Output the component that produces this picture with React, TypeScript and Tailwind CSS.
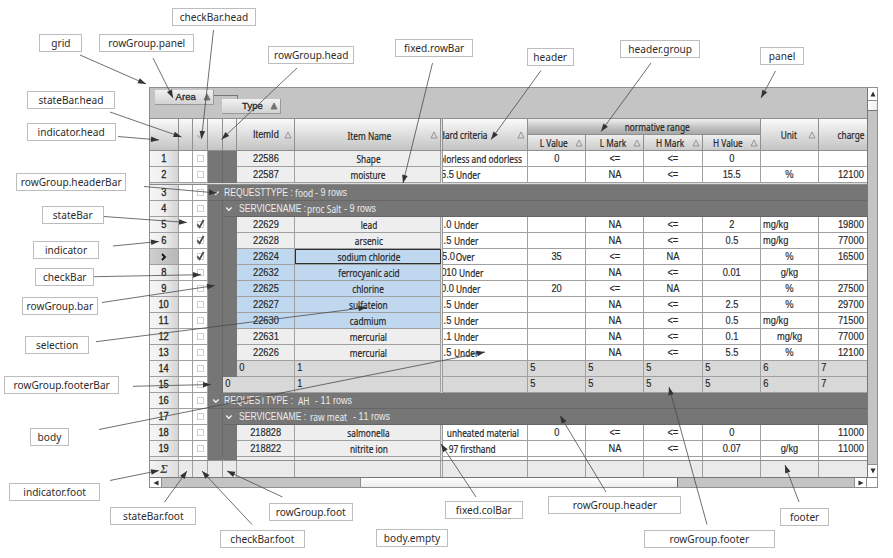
import type { ReactNode } from "react";

const SANS = "font-['Liberation_Sans',Arial,sans-serif] text-[10px] inline-block scale-x-[0.93] [font-kerning:none] [-webkit-text-stroke:0.15px]";
const HUMAN = "font-['Noto_Sans','Open_Sans',sans-serif] text-[10px] inline-block scale-x-[0.83] [-webkit-text-stroke:0.2px]";

const isNumeric = (s: string) => /^[\d.<=%]+$|^NA$|kg$/.test(s);

function Txt({ children, className = "" }: { children: string; className?: string }) {
  return (
    <span className={`${isNumeric(children) ? SANS : HUMAN} whitespace-pre leading-none ${className}`}>{children}</span>
  );
}

function Cell({ w, bg = "bg-white", className = "justify-center", children }: { w: string; bg?: string; className?: string; children?: ReactNode }) {
  return (
    <div className={`flex h-full shrink-0 items-center overflow-hidden border-r border-[#a0a0a0] ${w} ${bg} ${className}`}>{children}</div>
  );
}

function SortMark({ filled = false }: { filled?: boolean }) {
  return (
    <svg width="8" height="8" viewBox="0 0 8 8" className="shrink-0">
      <path d="M4 1 L7 7 H1 Z" fill={filled ? "#707070" : "none"} stroke={filled ? "#707070" : "#8c8c8c"} strokeWidth="0.9" />
    </svg>
  );
}

function HeadCell({ w, label, sans = false, shift = "", small = false }: { w: string; label?: string; sans?: boolean; shift?: string; small?: boolean }) {
  return (
    <div className={`relative flex h-full shrink-0 items-center justify-center overflow-hidden border-r border-[#8f8f8f] bg-linear-to-b ${small ? "from-[#eeeeee] to-[#cbcbcb]" : "from-[#fafafa] via-[#dedede] to-[#c4c4c4]"} ${w}`}>
      {label && (
        <>
          <span className={`${sans ? SANS : HUMAN} whitespace-nowrap leading-none ${shift}`}>{label}</span>
          <span className="absolute right-[2px]"><SortMark /></span>
        </>
      )}
    </div>
  );
}

function Chevron() {
  return (
    <svg width="8" height="6" viewBox="0 0 8 6" className="shrink-0">
      <path d="M1.2 1.5 L3.8 4.3 L6.6 1.5" fill="none" stroke="#f4f4f4" strokeWidth="1.3" />
    </svg>
  );
}

function CheckBox({ on = false }: { on?: boolean }) {
  return (
    <span className="relative block size-[7px] border border-[#cfcfcf] bg-white">
      {on && (
        <svg width="9" height="10" viewBox="0 0 9 10" className="absolute -top-[3px] -left-[2px]">
          <path d="M1.3 5.4 L3.6 8.2 L7.6 1" fill="none" stroke="#484848" strokeWidth="1.7" />
        </svg>
      )}
    </span>
  );
}

function Row({ n, checked = false, children, last = "border-[#a0a0a0]" }: { n: string; checked?: boolean; children: ReactNode; last?: string }) {
  const current = n === "7";
  return (
    <div className="flex h-4 shrink-0">
      <div className={`flex h-full w-[29px] shrink-0 items-center justify-center border-r border-b border-[#a0a0a0] bg-linear-to-r ${current ? "from-[#cfcfcf] to-[#b8b8b8]" : "from-[#f6f6f6] via-[#eeeeee] to-[#d4d4d4]"}`}>
        {current ? (
          <svg width="6" height="8" viewBox="0 0 6 8"><path d="M1 1 L4 4 L1 7" fill="none" stroke="#111" strokeWidth="1.8" /></svg>
        ) : (
          <span className="inline-block scale-x-[0.93] font-['Liberation_Sans',Arial,sans-serif] text-[10px] leading-none [font-kerning:none] [-webkit-text-stroke:0.3px]">{n}</span>
        )}
      </div>
      <div className="w-[14px] shrink-0 border-r border-b border-[#a0a0a0] bg-white" />
      <div className="flex w-[15px] shrink-0 items-center justify-center border-r border-b border-[#a0a0a0] bg-white">
        <CheckBox on={checked} />
      </div>
      <div className={`flex h-full min-w-0 grow border-b ${last}`}>{children}</div>
    </div>
  );
}

const DARK = "bg-[#767676]";
const Bar1 = () => <div className={`-mb-px w-[15px] shrink-0 border-r border-[#696969] ${DARK}`} />;
const Bar2 = () => <div className={`-mb-px w-[14px] shrink-0 ${DARK}`} />;

type Item = { n: string; id: string; name: string; crit: string; critWord: string; critAt: string; v: string[]; unit: string; unitAt?: string; charge: string; sel?: boolean; on?: boolean };

const fixedItems: Item[] = [
  { n: "1", id: "22586", name: "Shape", crit: "", critWord: "olorless and odorless", critAt: "pr-[5px]", v: ["0", "<=", "<=", "0"], unit: "", charge: "" },
  { n: "2", id: "22587", name: "moisture", crit: "5.5", critWord: "Under", critAt: "pr-[47px]", v: ["", "NA", "<=", "15.5"], unit: "%", charge: "12100" },
];
const LEFT = "justify-start pl-[2px]";
const saltItems: Item[] = [
  { n: "5", id: "22629", name: "lead", crit: ".0", critWord: "Under", critAt: "pr-[49px]", v: ["", "NA", "<=", "2"], unit: "mg/kg", unitAt: LEFT, charge: "19800", on: true },
  { n: "6", id: "22628", name: "arsenic", crit: ".5", critWord: "Under", critAt: "pr-[49px]", v: ["", "NA", "<=", "0.5"], unit: "mg/kg", unitAt: LEFT, charge: "77000", on: true },
  { n: "7", id: "22624", name: "sodium chloride", crit: "5.0", critWord: "Over", critAt: "pr-[52px]", v: ["35", "<=", "NA", ""], unit: "%", charge: "16500", on: true, sel: true },
  { n: "8", id: "22632", name: "ferrocyanic acid", crit: "010", critWord: "Under", critAt: "pr-[44px]", v: ["", "NA", "<=", "0.01"], unit: "g/kg", charge: "", sel: true },
  { n: "9", id: "22625", name: "chlorine", crit: "0.0", critWord: "Under", critAt: "pr-[47px]", v: ["20", "<=", "NA", ""], unit: "%", charge: "27500", sel: true },
  { n: "10", id: "22627", name: "sulfateion", crit: ".5", critWord: "Under", critAt: "pr-[49px]", v: ["", "NA", "<=", "2.5"], unit: "%", charge: "29700", sel: true },
  { n: "11", id: "22630", name: "cadmium", crit: ".5", critWord: "Under", critAt: "pr-[49px]", v: ["", "NA", "<=", "0.5"], unit: "mg/kg", unitAt: LEFT, charge: "71500", sel: true },
  { n: "12", id: "22631", name: "mercurial", crit: ".1", critWord: "Under", critAt: "pr-[49px]", v: ["", "NA", "<=", "0.1"], unit: "mg/kg", unitAt: "justify-end pr-[15px]", charge: "77000" },
  { n: "13", id: "22626", name: "mercurial", crit: ".5", critWord: "Under", critAt: "pr-[49px]", v: ["", "NA", "<=", "5.5"], unit: "%", charge: "12100" },
];
const meatItems: Item[] = [
  { n: "18", id: "218828", name: "salmonella", crit: "", critWord: "unheated material", critAt: "pr-[8px]", v: ["0", "<=", "<=", "0"], unit: "", charge: "11000" },
  { n: "19", id: "218822", name: "nitrite ion", crit: "", critWord: "97 firsthand", critAt: "pr-[31px]", v: ["", "NA", "<=", "0.07"], unit: "g/kg", charge: "11000" },
];

const VALUE_W = ["w-[58px]", "w-[58px]", "w-[59px]", "w-[58px]"];

function ColBar() {
  return <div className="-mb-px w-[2px] shrink-0 border-r border-[#999] bg-[#e2e2e2]" />;
}

function ItemRow({ r }: { r: Item }) {
  const bg = r.sel ? "bg-[#bfd8f0]" : "bg-[#eeeeee]";
  return (
    <Row n={r.n} checked={r.on}>
      <Bar1 />
      <Bar2 />
      <Cell w="w-[58px]" bg={bg}><Txt>{r.id}</Txt></Cell>
      <Cell w="w-[146px]" bg={bg} className={r.n === "7" ? "justify-center pl-[2px] outline outline-[#303030] -outline-offset-1" : "justify-center pl-[2px]"}>
        <Txt>{r.name}</Txt>
      </Cell>
      <ColBar />
      <Cell w="w-[85px]" className={`justify-end ${r.critAt}`}>
        <span className="flex shrink-0 items-center whitespace-nowrap">
          {r.crit && <Txt className="-mr-[3px] origin-right">{r.crit}</Txt>}
          <Txt className="origin-right">{r.critWord}</Txt>
        </span>
      </Cell>
      {r.v.map((v, i) => (
        <Cell key={i} w={VALUE_W[i]}>{v && <Txt>{v}</Txt>}</Cell>
      ))}
      <Cell w="w-[58px]" className={r.unitAt ?? "justify-center"}>{r.unit && <Txt className={r.unitAt === LEFT ? "origin-left" : ""}>{r.unit}</Txt>}</Cell>
      <div className="flex w-12 shrink-0 items-center justify-end bg-white pr-[3px]">{r.charge && <Txt className="origin-right">{r.charge}</Txt>}</div>
    </Row>
  );
}

function GroupRow({ n, nested = false, field, fieldW, name, nameW, count }: { n: string; nested?: boolean; field: string; fieldW: string; name: string; nameW: string; count: string }) {
  return (
    <Row n={n} last="border-[#666666]">
      {nested && <Bar1 />}
      <div className={`flex grow items-center text-[#ececec] ${DARK} ${nested ? "pl-[2px]" : "pl-[4px]"}`}>
        <Chevron />
        <span className={`${nested ? "ml-[6px]" : "ml-[4px]"} flex shrink-0 ${fieldW}`}>
          <span className="block origin-left scale-x-[0.86] whitespace-nowrap font-['Liberation_Sans',Arial,sans-serif] text-[10px] leading-none">{field}</span>
        </span>
        <span className={`flex shrink-0 items-center ${nameW}`}>
          <span className="block origin-left scale-x-[0.84] whitespace-nowrap font-['Noto_Sans',sans-serif] text-[10px] leading-none">{name}</span>
        </span>
        <span className="block origin-left scale-x-[0.9] whitespace-nowrap font-['Liberation_Sans',Arial,sans-serif] text-[10px] leading-none [font-kerning:none]">{count}</span>
      </div>
    </Row>
  );
}

function FootRow({ n, outer = false }: { n: string; outer?: boolean }) {
  const c = "justify-start items-start pt-px pl-[2px]";
  const g = "bg-[#d8d8d8]";
  return (
    <Row n={n}>
      <Bar1 />
      {!outer && <Bar2 />}
      <Cell w={outer ? "w-[72px]" : "w-[58px]"} bg={g} className={c}><Txt className="pt-px">0</Txt></Cell>
      <Cell w="w-[146px]" bg={g} className={c}><Txt className="pt-px">1</Txt></Cell>
      <ColBar />
      <Cell w="w-[85px]" bg={g} />
      {VALUE_W.map((w, i) => (
        <Cell key={i} w={w} bg={g} className={c}><Txt className="pt-px">5</Txt></Cell>
      ))}
      <Cell w="w-[58px]" bg={g} className={c}><Txt className="pt-px">6</Txt></Cell>
      <div className={`flex w-12 items-start pt-px pl-[2px] ${g}`}><Txt className="pt-px">7</Txt></div>
    </Row>
  );
}

function GroupPanel() {
  const chip = "absolute flex h-[15px] w-[59px] items-center justify-end gap-[7px] border-r border-b border-[#999] bg-linear-to-b from-[#f2f2f2] to-[#d2d2d2] pr-[2px]";
  const t = "font-['Liberation_Sans',Arial,sans-serif] text-[9.5px] leading-none tracking-[0.1px] [-webkit-text-stroke:0.3px]";
  return (
    <div className="relative h-[30px] shrink-0 bg-[#c4c4c4]">
      <div className="absolute top-[7px] left-[63px] h-[5px] w-[25px] border-t border-r border-[#777]" />
      <div className={`${chip} top-[2px] left-[5px]`}><span className={t}>Area</span><SortMark filled /></div>
      <div className={`${chip} top-[11px] left-[72px]`}><span className={t}>Type</span><SortMark filled /></div>
    </div>
  );
}

function Header() {
  return (
    <div className="flex h-[33px] shrink-0 border-y border-[#8f8f8f]">
      <HeadCell w="w-[29px]" />
      <HeadCell w="w-[14px]" />
      <div className="flex w-[15px] shrink-0 items-center justify-center border-r border-[#8f8f8f] bg-linear-to-b from-[#fafafa] via-[#dedede] to-[#c4c4c4]">
        <svg width="8" height="8" viewBox="0 0 8 8"><path d="M1 4 L3.5 6.5 L7 1" fill="none" stroke="#b5b5b5" strokeWidth="1.2" /></svg>
      </div>
      <HeadCell w="w-[15px]" />
      <HeadCell w="w-[14px]" />
      <HeadCell w="w-[58px]" label="ItemId" sans />
      <HeadCell w="w-[146px]" label="Item Name" shift="ml-[3px] mt-[2px]" />
      <div className="w-[2px] shrink-0 border-r border-[#8f8f8f] bg-[#e2e2e2]" />
      <div className="relative flex w-[85px] shrink-0 items-center justify-end overflow-hidden border-r border-[#8f8f8f] bg-linear-to-b from-[#fafafa] via-[#dedede] to-[#c4c4c4] pr-[39px]">
        <span className={`${HUMAN} origin-right whitespace-nowrap leading-none`}>dard criteria</span>
        <span className="absolute right-[2px]"><SortMark /></span>
      </div>
      <div className="flex w-[233px] shrink-0 flex-col">
        <div className="flex h-4 shrink-0 items-center justify-center border-r border-b border-[#8f8f8f] bg-linear-to-b from-[#f0f0f0] via-[#c6c6c6] to-[#a6a6a6] pl-[26px]">
          <span className={`${HUMAN} leading-none`}>normative range</span>
        </div>
        <div className="flex min-h-0 grow">
          <HeadCell w="w-[58px]" label="L Value" shift="-ml-[6px]" small />
          <HeadCell w="w-[58px]" label="L Mark" shift="-ml-[3px]" small />
          <HeadCell w="w-[59px]" label="H Mark" shift="-ml-[5px]" small />
          <HeadCell w="w-[58px]" label="H Value" shift="-ml-[8px]" small />
        </div>
      </div>
      <HeadCell w="w-[58px]" label="Unit" shift="-ml-[2px]" />
      <div className="flex w-12 shrink-0 items-center justify-end bg-linear-to-b from-[#fafafa] via-[#dedede] to-[#c4c4c4] pr-[3px]">
        <span className={`${HUMAN} origin-right leading-none`}>charge</span>
      </div>
    </div>
  );
}

const FOOT_W = ["w-[14px]", "w-[15px]", "w-[15px]", "w-[14px]", "w-[58px]", "w-[146px]", "w-[2px]", "w-[85px]", "w-[58px]", "w-[58px]", "w-[59px]", "w-[58px]", "w-[58px]"];

function Footer() {
  return (
    <div className="flex h-[17px] shrink-0 border-t border-[#8f8f8f] bg-[#eaeaea]">
      <div className="flex w-[29px] shrink-0 items-center justify-center border-r border-[#a0a0a0] bg-linear-to-r from-[#f4f4f4] to-[#dedede]">
        <span className="font-['Liberation_Serif',serif] text-[12px] font-bold italic leading-none text-[#444]">Σ</span>
      </div>
      {FOOT_W.map((w, i) => (
        <div key={i} className={`shrink-0 border-r border-[#a0a0a0] ${w}`} />
      ))}
    </div>
  );
}

function EmptyStrip() {
  return (
    <div className="flex h-[3px] shrink-0 bg-white">
      <div className="w-[29px] shrink-0 border-r border-[#a0a0a0] bg-[#ececec]" />
      <div className="w-[14px] shrink-0 border-r border-[#a0a0a0]" />
      <div className="w-[15px] shrink-0 border-r border-[#a0a0a0]" />
      <div className={`w-[29px] shrink-0 ${DARK}`} />
      <div className="w-[58px] shrink-0 border-r border-[#a0a0a0] bg-[#eee]" />
      <div className="w-[146px] shrink-0 border-r border-[#a0a0a0] bg-[#eee]" />
      <ColBar />
      {["w-[85px]", ...VALUE_W, "w-[58px]"].map((w, i) => (
        <div key={i} className={`shrink-0 border-r border-[#a0a0a0] ${w}`} />
      ))}
    </div>
  );
}

function Glyph({ d }: { d: string }) {
  return <svg width="8" height="8" viewBox="0 0 8 8"><path d={d} fill="#2e2e2e" /></svg>;
}

function Grid() {
  return (
    <div className="mt-[87px] ml-[149px] flex h-[401px] w-[729px] flex-col border border-[#8f8f8f] text-[#262626]">
      <div className="flex h-[389px] shrink-0">
        <div className="flex w-[717px] shrink-0 flex-col overflow-hidden">
          <GroupPanel />
          <Header />
          {fixedItems.map((r) => <ItemRow key={r.n} r={r} />)}
          <div className="h-[2px] shrink-0 border-b border-[#8a8a8a] bg-[#dcdcdc]" />
          <GroupRow n="3" field="REQUESTTYPE :" fieldW="w-[71px]" name="food" nameW="w-[20px]" count="- 9 rows" />
          <GroupRow n="4" nested field="SERVICENAME :" fieldW="w-[68px]" name="proc Salt" nameW="w-[37px]" count="- 9 rows" />
          {saltItems.map((r) => <ItemRow key={r.n} r={r} />)}
          <FootRow n="14" />
          <FootRow n="15" outer />
          <GroupRow n="16" field="REQUESTTYPE :" fieldW="w-[74px]" name="AH" nameW="w-[17px]" count="- 11 rows" />
          <GroupRow n="17" nested field="SERVICENAME :" fieldW="w-[71px]" name="raw meat" nameW="w-[43px]" count="- 11 rows" />
          {meatItems.map((r) => <ItemRow key={r.n} r={r} />)}
          <EmptyStrip />
          <Footer />
        </div>
        <div className="flex grow flex-col border-l border-[#777] bg-[#c4c4c4]">
          <div className="flex h-[13px] shrink-0 items-center justify-center border-b border-[#8f8f8f] bg-white"><Glyph d="M4 1.5 L6.5 6.5 H1.5 Z" /></div>
          <div className="h-[10px] shrink-0 border-b border-[#777] bg-linear-to-r from-white to-[#eee]" />
          <div className="grow" />
          <div className="flex h-[13px] shrink-0 items-center justify-center border-t border-[#8f8f8f] bg-white"><Glyph d="M1.5 1.5 H6.5 L4 6.5 Z" /></div>
        </div>
      </div>
      <div className="flex grow border-t border-[#777] bg-[#c4c4c4]">
        <div className="flex w-3 shrink-0 items-center justify-center border-r border-[#8f8f8f] bg-white"><Glyph d="M6.5 1.5 V6.5 L1.5 4 Z" /></div>
        <div className="w-[199px] shrink-0 border-r border-[#8f8f8f]" />
        <div className="w-[317px] shrink-0 border-r border-[#666] bg-linear-to-b from-white to-[#ececec]" />
        <div className="grow" />
        <div className="flex w-3 shrink-0 items-center justify-center border-l border-[#8f8f8f] bg-white"><Glyph d="M1.5 1.5 L6.5 4 L1.5 6.5 Z" /></div>
        <div className="w-[11px] shrink-0 border-l border-[#8f8f8f] bg-white" />
      </div>
    </div>
  );
}

const callouts: [string, string][] = [
  ["checkBar.head", "left-[172px] top-[8px] w-[84px]"],
  ["grid", "left-[39px] top-[34px] w-[43px]"],
  ["rowGroup.panel", "left-[99px] top-[34px] w-[95px]"],
  ["rowGroup.head", "left-[268px] top-[46px] w-[86px]"],
  ["fixed.rowBar", "left-[395px] top-[39px] w-[78px]"],
  ["header", "left-[527px] top-[48px] w-[47px]"],
  ["header.group", "left-[620px] top-[40px] w-[80px]"],
  ["panel", "left-[760px] top-[47px] w-[44px]"],
  ["stateBar.head", "left-[27px] top-[91px] w-[88px]"],
  ["indicator.head", "left-[27px] top-[123px] w-[89px]"],
  ["rowGroup.headerBar", "left-[16px] top-[173px] w-[110px]"],
  ["stateBar", "left-[42px] top-[206px] w-[62px]"],
  ["indicator", "left-[33px] top-[241px] w-[66px]"],
  ["checkBar", "left-[35px] top-[268px] w-[59px]"],
  ["rowGroup.bar", "left-[22px] top-[297px] w-[76px]"],
  ["selection", "left-[25px] top-[336px] w-[64px]"],
  ["rowGroup.footerBar", "left-[4px] top-[376px] w-[115px]"],
  ["body", "left-[30px] top-[428px] w-[39px]"],
  ["indicator.foot", "left-[9px] top-[483px] w-[91px]"],
  ["stateBar.foot", "left-[110px] top-[507px] w-[86px]"],
  ["checkBar.foot", "left-[220px] top-[530px] w-[85px]"],
  ["rowGroup.foot", "left-[269px] top-[503px] w-[84px]"],
  ["fixed.colBar", "left-[445px] top-[501px] w-[78px]"],
  ["body.empty", "left-[376px] top-[529px] w-[72px]"],
  ["rowGroup.header", "left-[548px] top-[496px] w-[133px]"],
  ["rowGroup.footer", "left-[644px] top-[530px] w-[131px]"],
  ["footer", "left-[780px] top-[508px] w-[49px]"],
];

const arrows: [number, number, number, number][] = [
  [80, 55, 146, 84], [153, 58, 173, 98], [213.5, 30, 201.5, 139], [297, 68, 221.5, 139.5],
  [110, 112, 181.5, 137], [118, 136.5, 159, 140], [432.5, 63, 403, 183], [541, 70.5, 491, 139.5],
  [651, 63, 601, 131.5], [775.5, 71, 761, 98], [144, 186.5, 217, 193], [104, 216.5, 187, 222.5],
  [113, 246, 159, 241.5], [94, 276.7, 201, 274.7], [102, 302.5, 215, 285.5], [96, 341.7, 366.5, 307.5],
  [99, 429.5, 485, 352], [133, 386.3, 211, 384.5], [110, 480.5, 159, 470.5], [164.5, 502, 187, 471],
  [252, 524.5, 202, 471], [282.5, 497, 227, 471], [476, 497, 441, 444], [606, 492, 560, 415.5],
  [707, 524.5, 669, 387], [799, 502, 785, 465],
];

function Arrows() {
  return (
    <svg className="pointer-events-none absolute inset-0" width="893" height="558" viewBox="0 0 893 558">
      {arrows.map(([x1, y1, x2, y2], i) => {
        const angle = (Math.atan2(y2 - y1, x2 - x1) * 180) / Math.PI;
        return (
          <g key={i}>
            <line x1={x1} y1={y1} x2={x2} y2={y2} stroke="#4a4a4a" strokeWidth="0.8" />
            <path d="M0 0 L-8 -2.8 L-8 2.8 Z" fill="#333" transform={`translate(${x2} ${y2}) rotate(${angle})`} />
          </g>
        );
      })}
    </svg>
  );
}

export default function App() {
  return (
    <div className="relative flex h-[558px] w-[893px] flex-col items-start overflow-hidden bg-white">
      <Grid />
      <Arrows />
      {callouts.map(([text, box]) => (
        <div key={text} className={`absolute flex h-[18px] items-center justify-center border border-[#bdbdbd] bg-white ${box}`}>
          <span className="inline-block scale-x-[0.88] whitespace-nowrap font-['Noto_Sans','Open_Sans',sans-serif] text-[11.5px] leading-none text-[#2b2b2b]">{text}</span>
        </div>
      ))}
    </div>
  );
}
